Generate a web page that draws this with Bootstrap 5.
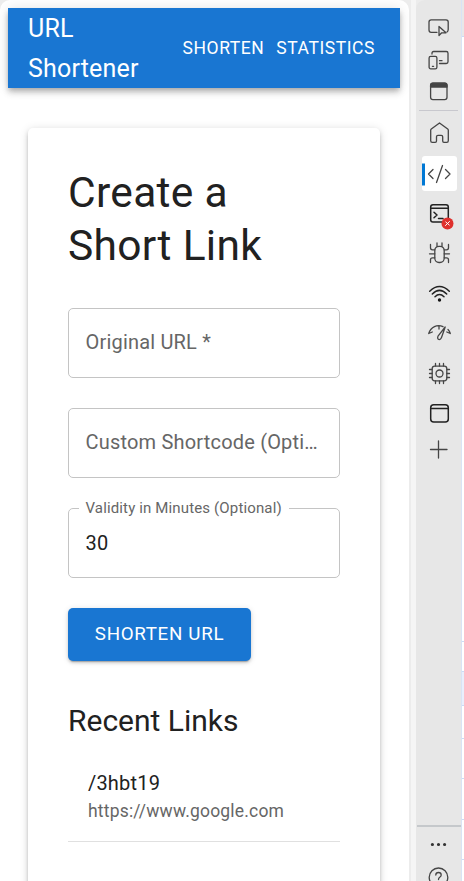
<!DOCTYPE html>
<html lang="en">
<head>
<meta charset="utf-8">
<meta name="viewport" content="width=device-width, initial-scale=1">
<title>URL Shortener</title>
<link href="https://cdn.jsdelivr.net/npm/bootstrap@5.3.0/dist/css/bootstrap.min.css" rel="stylesheet">
<style>
  body { font-family: Roboto, sans-serif; color: #212121; background: #ececec; height: 881px; }
  .page-pane { width: 409px; padding: 8px 9px 0 8px; border-radius: 10px 10px 0 0; }
  .topbar { height: 80px; padding: 2px 20px 0; background: #1976d2; box-shadow: 0 2.5px 5px -1px rgba(0,0,0,.2), 0 5px 6px rgba(0,0,0,.14), 0 1px 12px rgba(0,0,0,.12); }
  .topbar .navbar-brand { width: 140px; font-size: 25px; line-height: 40px; letter-spacing: .0075em; white-space: normal; }
  .topbar .nav-link { font-size: 17.5px; line-height: 30px; letter-spacing: .032em; }
  .nav-gap { gap: 12px; padding: 0 5px 2px 0; }
  .panel { margin: 40px 20px 0; height: 800px; padding: 39px 40px; border-radius: 5px; box-shadow: 0 3px 4px -2px rgba(0,0,0,.2), 0 3px 5px rgba(0,0,0,.14), 0 1px 10px rgba(0,0,0,.12); }
  .panel h1 { font-size: 42.5px; line-height: 52.5px; font-weight: 400; letter-spacing: .00735em; margin-bottom: 36px; }
  .field { height: 70px; margin-bottom: 30px; padding: 0 16.5px; border: 1px solid #c4c4c4; border-radius: 5px; font-size: 20px; line-height: 28px; letter-spacing: .00938em; color: #666; }
  .field .field-name { padding-bottom: 2px; }
  .field legend { font-size: 15px; line-height: 18px; letter-spacing: .00938em; left: 10px; top: -10px; width: 210px; padding-left: 6.500px; }
  .field .field-value { color: #212121; }
  .btn-send { height: 53px; width: 183px; padding: 0; background: #1976d2; color: #fff; border: 0; border-radius: 5px; font-size: 18.75px; letter-spacing: .036em; box-shadow: 0 3px 1px -2px rgba(0,0,0,.2), 0 2px 3px rgba(0,0,0,.14), 0 1px 6px rgba(0,0,0,.12); }
  .panel h2 { font-size: 30px; line-height: 40px; font-weight: 400; margin: 40px 0 10px; }
  .link-row { padding: 17px 20px; height: 91px; border-bottom: 1px solid #e0e0e0; }
  .link-code { font-size: 20px; line-height: 30px; letter-spacing: .00938em; }
  .link-target { font-size: 17.5px; line-height: 27px; letter-spacing: .01071em; color: #666; }
  .gutter { width: 7px; background: #f5f5f5; border-left: 2px solid #ececec; }
  .tools { width: 45px; padding-top: 12px; background: #e7e7e7; border-radius: 9px 0 0 0; }
  .tool { padding-left: 9px; height: 40px; flex: none; }
  .tool-s { height: 32px; }
  .tool svg { width: 28px; height: 28px; overflow: visible; fill: none; stroke: #454545; stroke-width: 1.3; stroke-linecap: round; stroke-linejoin: round; }
  .tool .dark { stroke: #222; stroke-width: 1.5; }
  .rule { height: 1px; margin: 2px 3px; background: #c8c8ce; flex: none; }
  .tool-on { height: 35px; width: 35px; margin: 3px 0 2px 6px; padding-left: 3px; background: #fff; border-radius: 3px; }
  .foot { height: 56px; border-top: 2px solid #c5c8cb; margin-left: 1px; }
  .foot .tool { padding-left: 8px; }
  .edge { width: 3px; border-left: 1px solid #d9e3f5; background: #fff; }
  .edge div { border-bottom: 1px solid #cbdcf5; flex: none; }
  .e0 { height: 37px; background: #e8e8e8; } .e1 { height: 605px; } .e2 { height: 30px; }
  .e3 { height: 34px; background: #e9effc; } .e4 { height: 33px; } .e5 { height: 40px; } .e6 { height: 41px; } .e7 { height: 40px; }
</style>
<script src="https://cdn.jsdelivr.net/npm/bootstrap@5.3.0/dist/js/bootstrap.bundle.min.js"></script>
</head>
<body class="d-flex overflow-hidden">
<main class="page-pane bg-white flex-shrink-0 overflow-hidden">
  <nav class="topbar navbar navbar-dark d-flex flex-nowrap justify-content-between">
    <span class="navbar-brand p-0 m-0 text-white">URL Shortener</span>
    <div class="nav-gap d-flex">
      <a class="nav-link p-0 text-white" href="#">SHORTEN</a>
      <a class="nav-link p-0 text-white" href="#">STATISTICS</a>
    </div>
  </nav>
  <section class="panel bg-white">
    <h1>Create a Short Link</h1>
    <div class="field d-flex align-items-center"><span class="field-name text-truncate">Original URL *</span></div>
    <div class="field d-flex align-items-center"><span class="field-name text-truncate">Custom Shortcode (Opti…</span></div>
    <div class="field d-flex align-items-center position-relative">
      <legend class="position-absolute bg-white m-0 text-nowrap">Validity in Minutes (Optional)</legend>
      <span class="field-value">30</span>
    </div>
    <button class="btn btn-send" type="button">SHORTEN URL</button>
    <h2>Recent Links</h2>
    <div class="link-row">
      <div class="link-code">/3hbt19</div>
      <div class="link-target">https://www.google.com</div>
    </div>
  </section>
</main>
<div class="gutter flex-shrink-0"></div>
<aside class="tools d-flex flex-column flex-shrink-0">
  <div class="tool tool-s d-flex align-items-center"><svg viewBox="0 0 28 28"><path d="M12 18.3H6.2Q4 18.300 4 16.100V8Q4 5.800 6.200 5.800H21Q23.200 5.800 23.200 8V15.500Q23.200 17.200 22 18"/><path d="M14 12.500V21.500L16.700 18.800H21Z"/></svg></div>
  <div class="tool tool-s d-flex align-items-center"><svg viewBox="0 0 28 28"><path d="M7 8V7.200Q7 5.500 8.700 5.500H21.300Q23 5.500 23 7.200V15.800Q23 17.500 21.300 17.500H14.500M14.500 14.700H17"/><rect x="4.100" y="10.300" width="7.800" height="12.500" rx="1.600"/><path d="M7.400 20.300H8.600"/></svg></div>
  <div class="tool tool-s d-flex align-items-center"><svg viewBox="0 0 28 28"><rect x="5.600" y="5.200" width="16.400" height="16.400" rx="2.300"/><path d="M5.600 9V7.500Q5.600 5.200 8 5.200H19.800Q22 5.200 22 7.500V9Z" fill="#454545"/></svg></div>
  <div class="rule"></div>
  <div class="tool d-flex align-items-center"><svg viewBox="0 0 28 28"><path d="M5.700 11.200Q5.700 10.500 6.300 10L14.500 4L22.700 10Q23.300 10.500 23.300 11.200V21.700Q23.300 23.300 21.700 23.300H19Q17.700 23.300 17.700 22V17.800Q17.700 16.300 16.200 16.300H13Q11.500 16.300 11.500 17.800V22Q11.500 23.300 10.200 23.300H7.300Q5.700 23.300 5.700 21.700Z"/></svg></div>
  <div class="tool tool-on d-flex align-items-center position-relative"><svg viewBox="0 0 28 28"><path d="M-1.500 3.500V25.500" stroke="#0078d4" stroke-width="3" stroke-linecap="butt"/><path d="M8 9.500L3.500 14L8 18.500M20.500 9.500L25 14L20.500 18.500M17.500 5.500L11.500 22.500"/></svg></div>
  <div class="tool d-flex align-items-center"><svg viewBox="0 0 28 28"><rect class="dark" x="5.700" y="5.700" width="17.600" height="17.300" rx="2.300"/><path class="dark" d="M5.700 9.300H23.300M9 13.200L12 16L9 18.800M13.500 19.500H18"/><circle cx="22.500" cy="24.500" r="6" fill="#df302d" stroke="none"/><path d="M20.500 26.500L24.500 22.500M20.800 23L24.200 26" stroke="#fff" stroke-width="1"/></svg></div>
  <div class="tool d-flex align-items-center"><svg viewBox="0 0 28 28"><rect x="9.800" y="7.300" width="9.400" height="16.200" rx="4.200"/><path d="M12 7.300V4M17 7.300V4M9.800 10.800H7.500Q5.500 10.800 5.500 8.800V5.500M19.200 10.800H21.500Q23.500 10.800 23.500 8.800V5.500M4.500 14.800H9.800M19.200 14.800H24.500M9.800 18.800H7.500Q5.500 18.800 5.500 20.800V23.500M19.200 18.800H21.500Q23.500 18.800 23.500 20.800V23.500"/></svg></div>
  <div class="tool d-flex align-items-center"><svg viewBox="0 0 28 28"><path class="dark" d="M4.700 12.300Q14.500 2.800 24.300 12.300M7.300 15Q14.500 7.800 21.700 15M10 17.700Q14.500 13.200 19 17.700"/><circle cx="14.500" cy="21" r="1.700" fill="#111" stroke="none"/></svg></div>
  <div class="tool d-flex align-items-center"><svg viewBox="0 0 28 28"><path d="M3.700 14.500C6 8 12 5 18 7.700M23 10.500Q24.700 12.200 25.300 14.500M3.700 14.500L7.300 13M14 6.800V10M25.300 14.500L21.800 13M20.200 8L13 17.200C11.500 20.800 15.300 21.800 16.500 18.500Z"/></svg></div>
  <div class="tool d-flex align-items-center"><svg viewBox="0 0 28 28"><rect x="7.200" y="7.200" width="14.600" height="14.600" rx="2.500"/><circle cx="14.500" cy="14.500" r="3.500"/><path d="M10.500 7V4.500M14.500 7V4.500M18.500 7V4.500M10.500 24.500V22M14.500 24.500V22M18.500 24.500V22M7 10.500H4.500M7 14.500H4.500M7 18.500H4.500M24.500 10.500H22M24.500 14.500H22M24.500 18.500H22"/></svg></div>
  <div class="tool d-flex align-items-center"><svg viewBox="0 0 28 28"><rect class="dark" x="5.700" y="5.700" width="17.600" height="17.300" rx="3"/><path class="dark" d="M5.700 9.500H23.300"/></svg></div>
  <div class="tool tool-s d-flex align-items-center"><svg viewBox="0 0 28 28"><path d="M5.500 14.500H22M13.500 6V23"/></svg></div>
  <div class="foot mt-auto">
    <div class="tool tool-s d-flex align-items-center"><svg viewBox="0 0 28 28"><path fill="#333" stroke="none" d="M5.800 15.500a1.600 1.600 0 1 0 3.200 0a1.600 1.600 0 1 0 -3.200 0M11.900 15.500a1.600 1.600 0 1 0 3.200 0a1.600 1.600 0 1 0 -3.200 0M18 15.500a1.600 1.600 0 1 0 3.200 0a1.600 1.600 0 1 0 -3.200 0"/></svg></div>
    <div class="tool tool-s d-flex align-items-center"><svg viewBox="0 0 28 28"><circle cx="13.500" cy="16.300" r="9.300"/><path d="M10.800 14Q10.800 11.500 13.500 11.500Q16.200 11.500 16.200 14Q16.200 15.300 14.700 16.300Q13.500 17.200 13.500 18.500"/></svg></div>
  </div>
</aside>
<div class="edge d-flex flex-column flex-shrink-0"><div class="e0"></div><div class="e1"></div><div class="e2"></div><div class="e3"></div><div class="e4"></div><div class="e5"></div><div class="e6"></div><div class="e7"></div></div>
</body>
</html>
